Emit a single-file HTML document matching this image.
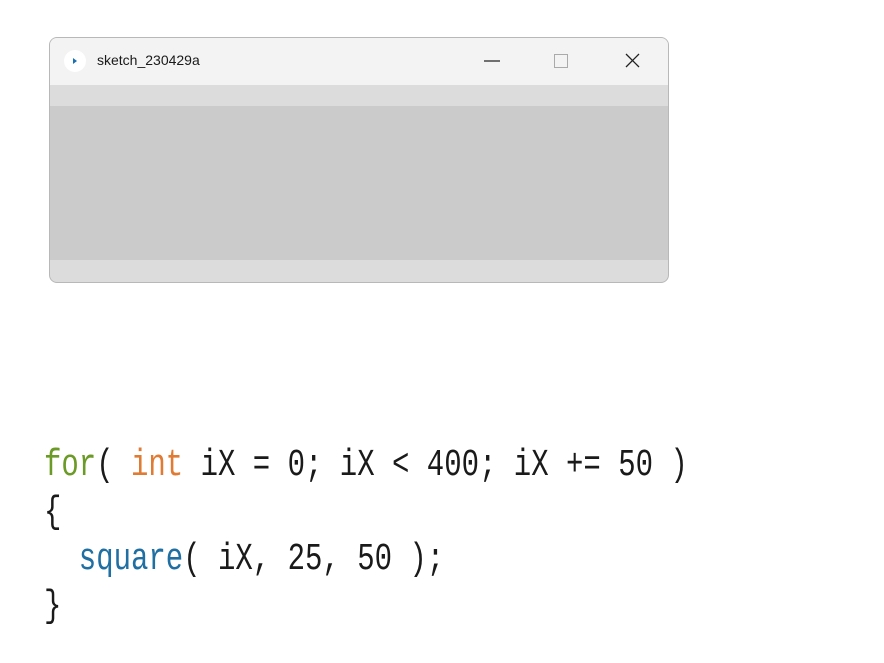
<!DOCTYPE html>
<html><head><meta charset="utf-8"><style>
html,body{margin:0;padding:0;background:#fff;width:884px;height:663px;overflow:hidden;position:relative}
.win{position:absolute;left:49px;top:37px;width:618px;height:244px;border:1px solid #b8b8b8;border-radius:8px;overflow:hidden;background:#dcdcdc}
.tb{position:absolute;left:0;top:0;width:100%;height:47px;background:#f3f3f3}
.s1{position:absolute;left:0;top:68px;width:100%;height:154px;background:#cbcbcb}
.title{position:absolute;left:47px;top:14px;font:14px "Liberation Sans",sans-serif;color:#1a1a1a}
.ic{position:absolute;left:14px;top:12px;width:22px;height:22px;border-radius:50%;background:#fff}
.ic:after{content:"";position:absolute;left:9px;top:8px;border-left:4px solid #1a6fb3;border-top:3px solid transparent;border-bottom:3px solid transparent}
.code{position:absolute;left:44px;top:442px;font:38px/47px "Liberation Mono",monospace;color:#1a1a1a;white-space:pre;transform:scaleX(0.763);transform-origin:0 0}
.g{color:#6b9a26}.o{color:#e07b34}.b{color:#1f6fa3}
</style></head><body>
<div class="win">
<div class="tb"></div><div class="s1"></div>
<div class="ic"></div>
<div class="title">sketch_230429a</div>
<svg style="position:absolute;left:420px;top:10px" width="200" height="26">
<line x1="14" y1="13" x2="30" y2="13" stroke="#222" stroke-width="1.3"/>
<rect x="84.5" y="6.5" width="13" height="13" fill="none" stroke="#aaa" stroke-width="1"/>
<path d="M156 6 L169 19 M169 6 L156 19" stroke="#222" stroke-width="1.3"/>
</svg>
</div>
<div class="code"><span class="g">for</span>( <span class="o">int</span> iX = 0; iX &lt; 400; iX += 50 )
{
  <span class="b">square</span>( iX, 25, 50 );
}</div>
</body></html>
